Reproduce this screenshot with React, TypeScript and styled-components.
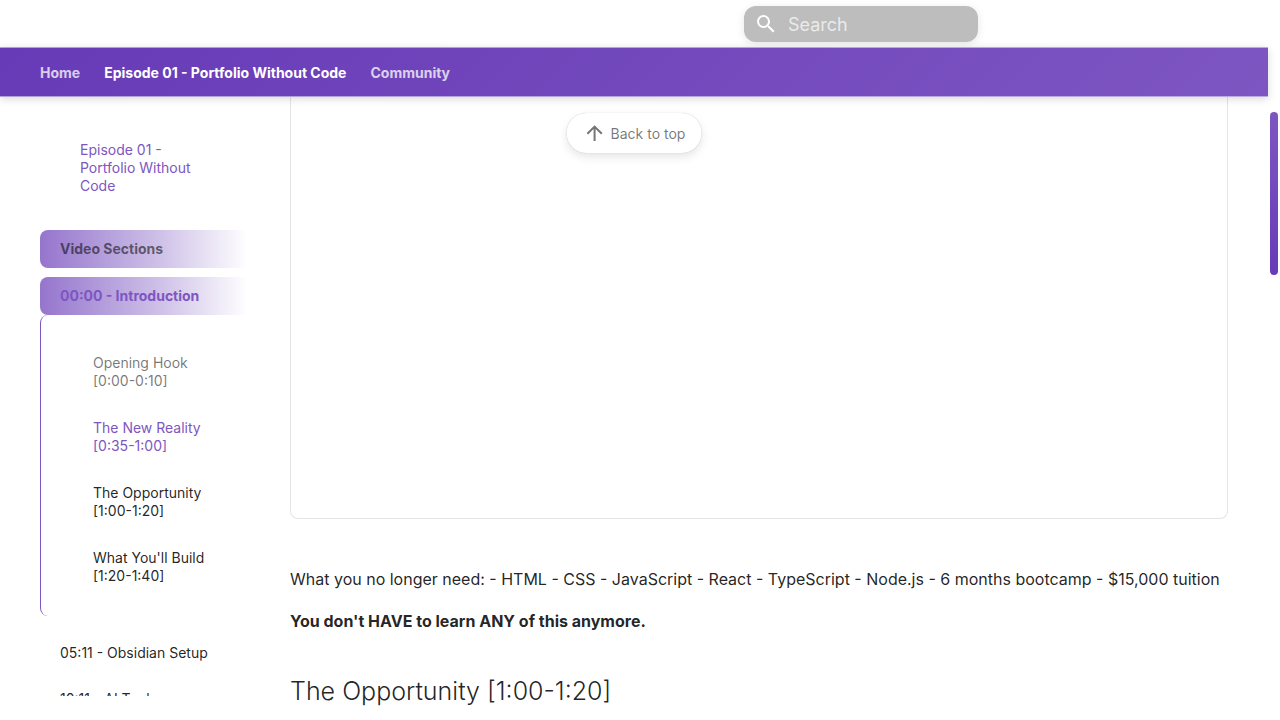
import React from "react";
import styled, { createGlobalStyle } from "styled-components";

const purple = "#7e56c2";
const deepPurple = "#673ab7";
const ink = "rgba(0, 0, 0, 0.87)";
const muted = "rgba(0, 0, 0, 0.54)";

const GlobalStyle = createGlobalStyle`
  *, *::before, *::after { box-sizing: border-box; }
  body {
    margin: 0;
    background: #fff;
    color: ${ink};
    font-family: Inter, "Liberation Sans", sans-serif;
    font-size: 16px;
    -webkit-font-smoothing: antialiased;
  }
  a { color: inherit; text-decoration: none; }
`;

const Shell = styled.div`
  display: flex;
  height: 100vh;
  overflow: hidden;
`;

const Page = styled.div`
  display: flex;
  flex-direction: column;
  flex: 1;
  min-width: 0;
`;

const Header = styled.header`
  display: flex;
  flex: none;
  align-items: center;
  justify-content: flex-end;
  height: 48px;
  padding-right: 290px;
`;

const SearchForm = styled.form`
  display: flex;
  align-items: center;
  gap: 10px;
  width: 234px;
  height: 36px;
  padding: 0 10px;
  border-radius: 12px;
  background: #bdbdbd;
  color: #fff;
  box-shadow: 0 2px 8px rgba(0, 0, 0, 0.1);

  svg { flex: none; }
`;

const SearchInput = styled.input`
  flex: 1;
  min-width: 0;
  padding: 0;
  border: 0;
  outline: 0;
  background: transparent;
  color: #fff;
  font: inherit;
  font-size: 18px;

  &::placeholder { color: rgba(255, 255, 255, 0.7); opacity: 1; }
`;

const Tabs = styled.nav`
  position: relative;
  z-index: 2;
  display: flex;
  flex: none;
  align-items: center;
  gap: 24px;
  height: 50px;
  margin-top: -1px;
  padding: 2px 40px 0;
  border: solid rgba(255, 255, 255, 0.5);
  border-width: 1px 0;
  background: linear-gradient(135deg, ${deepPurple}, ${purple}) border-box;
  box-shadow: 0 2px 8px rgba(0, 0, 0, 0.15);
  color: #fff;
`;

const Tab = styled.a<{ $active?: boolean }>`
  font-size: 14px;
  font-weight: 700;
  line-height: 18px;
  white-space: nowrap;
  opacity: ${(p) => (p.$active ? 1 : 0.75)};
`;

const Main = styled.div`
  position: relative;
  display: grid;
  flex: 1;
  grid-template-columns: 210px minmax(0, 1fr);
  gap: 40px;
  min-height: 0;
  padding: 0 40px;
`;

const Sidebar = styled.nav`
  min-height: 0;
  margin: 24px 0;
  overflow: hidden;
  font-size: 14px;
  line-height: 18px;
`;

const SiteTitle = styled.a`
  display: block;
  padding: 20px 40px 26px;
  color: ${purple};
`;

const SectionBar = styled.a<{ $active?: boolean }>`
  display: block;
  width: 208px;
  margin-top: 9px;
  padding: 10px 20px;
  border-radius: 8px;
  background: linear-gradient(90deg, #9575cd, #d1c4e9 60%, #fff);
  color: ${(p) => (p.$active ? purple : muted)};
  font-weight: 700;
`;

const SubList = styled.ul`
  display: flex;
  flex-direction: column;
  gap: 29px;
  margin: 0;
  padding: 39px 40px 31px 52px;
  border-left: 1px solid ${purple};
  border-radius: 8px;
  list-style: none;
`;

const SubLink = styled.a<{ $tone?: "passed" | "current" }>`
  display: block;
  color: ${(p) => (p.$tone === "passed" ? muted : p.$tone === "current" ? purple : ink)};
`;

const SectionLink = styled.a`
  display: block;
  padding: 28px 20px 0;
`;

const Article = styled.main`
  min-width: 0;
  overflow: hidden;
`;

const VideoFrame = styled.section`
  height: 422px;
  border: 1px solid #e4e4e7;
  border-top: 0;
  border-radius: 0 0 8px 8px;
`;

const Paragraph = styled.p`
  margin: 0 0 16px;
  line-height: 26px;

  ${VideoFrame} + & { margin-top: 47px; }
`;

const Heading = styled.h2`
  margin: 40px 0 0;
  font-size: 25px;
  font-weight: 300;
  line-height: 35px;
`;

const BackToTop = styled.button`
  position: absolute;
  top: 16px;
  left: 50%;
  display: flex;
  align-items: center;
  gap: 4px;
  height: 40px;
  padding: 0 16px;
  border: 0;
  border-radius: 20px;
  background: #fff;
  box-shadow: 0 4px 10px rgba(0, 0, 0, 0.1), 0 0 1px rgba(0, 0, 0, 0.25);
  color: ${muted};
  font: inherit;
  font-size: 14px;
  white-space: nowrap;
  transform: translateX(-50%);
`;

const ScrollTrack = styled.div`
  flex: none;
  width: 12px;
  padding: 112px 2px 0;
`;

const ScrollThumb = styled.div`
  height: 163px;
  border-radius: 4px;
  background: linear-gradient(${purple}, ${deepPurple});
`;

const Icon = ({ path, size }: { path: string; size: number }) => (
  <svg viewBox="0 0 24 24" width={size} height={size} fill="currentColor" aria-hidden="true">
    <path d={path} />
  </svg>
);

const magnify =
  "M9.5 3A6.5 6.5 0 0 1 16 9.5c0 1.61-.59 3.09-1.56 4.23l.27.27h.79l5 5-1.5 1.5-5-5v-.79l-.27-.27A6.52 6.52 0 0 1 9.5 16 6.5 6.5 0 0 1 3 9.5 6.5 6.5 0 0 1 9.5 3m0 2C7 5 5 7 5 9.5S7 14 9.5 14 14 12 14 9.5 12 5 9.5 5Z";
const arrowUp = "M13 20h-2V8l-5.5 5.5-1.42-1.42L12 4.16l7.92 7.92-1.42 1.42L13 8v12Z";

const subSections: { title: string; time: string; tone?: "passed" | "current" }[] = [
  { title: "Opening Hook", time: "[0:00-0:10]", tone: "passed" },
  { title: "The New Reality", time: "[0:35-1:00]", tone: "current" },
  { title: "The Opportunity", time: "[1:00-1:20]" },
  { title: "What You'll Build", time: "[1:20-1:40]" },
];

export default function App() {
  return (
    <Shell>
      <GlobalStyle />
      <Page>
        <Header>
          <SearchForm role="search">
            <Icon path={magnify} size={24} />
            <SearchInput type="text" placeholder="Search" aria-label="Search" />
          </SearchForm>
        </Header>
        <Tabs aria-label="Tabs">
          <Tab href="#home">Home</Tab>
          <Tab href="#episode" $active>Episode 01 - Portfolio Without Code</Tab>
          <Tab href="#community">Community</Tab>
        </Tabs>
        <Main>
          <Sidebar aria-label="Navigation">
            <SiteTitle href="#episode">Episode 01 - Portfolio Without Code</SiteTitle>
            <SectionBar href="#sections">Video Sections</SectionBar>
            <SectionBar href="#introduction" $active>00:00 - Introduction</SectionBar>
            <SubList>
              {subSections.map((s) => (
                <li key={s.title}>
                  <SubLink href="#section" $tone={s.tone}>
                    {s.title} {s.time}
                  </SubLink>
                </li>
              ))}
            </SubList>
            <SectionLink href="#obsidian">05:11 - Obsidian Setup</SectionLink>
            <SectionLink href="#tools">10:11 - AI Tools</SectionLink>
          </Sidebar>
          <Article>
            <VideoFrame aria-label="Video" />
            <Paragraph>
              What you no longer need: - HTML - CSS - JavaScript - React - TypeScript - Node.js - 6
              months bootcamp - $15,000 tuition
            </Paragraph>
            <Paragraph>
              <strong>You don't HAVE to learn ANY of this anymore.</strong>
            </Paragraph>
            <Heading>The Opportunity [1:00-1:20]</Heading>
          </Article>
          <BackToTop type="button">
            <Icon path={arrowUp} size={24} />
            Back to top
          </BackToTop>
        </Main>
      </Page>
      <ScrollTrack>
        <ScrollThumb />
      </ScrollTrack>
    </Shell>
  );
}
